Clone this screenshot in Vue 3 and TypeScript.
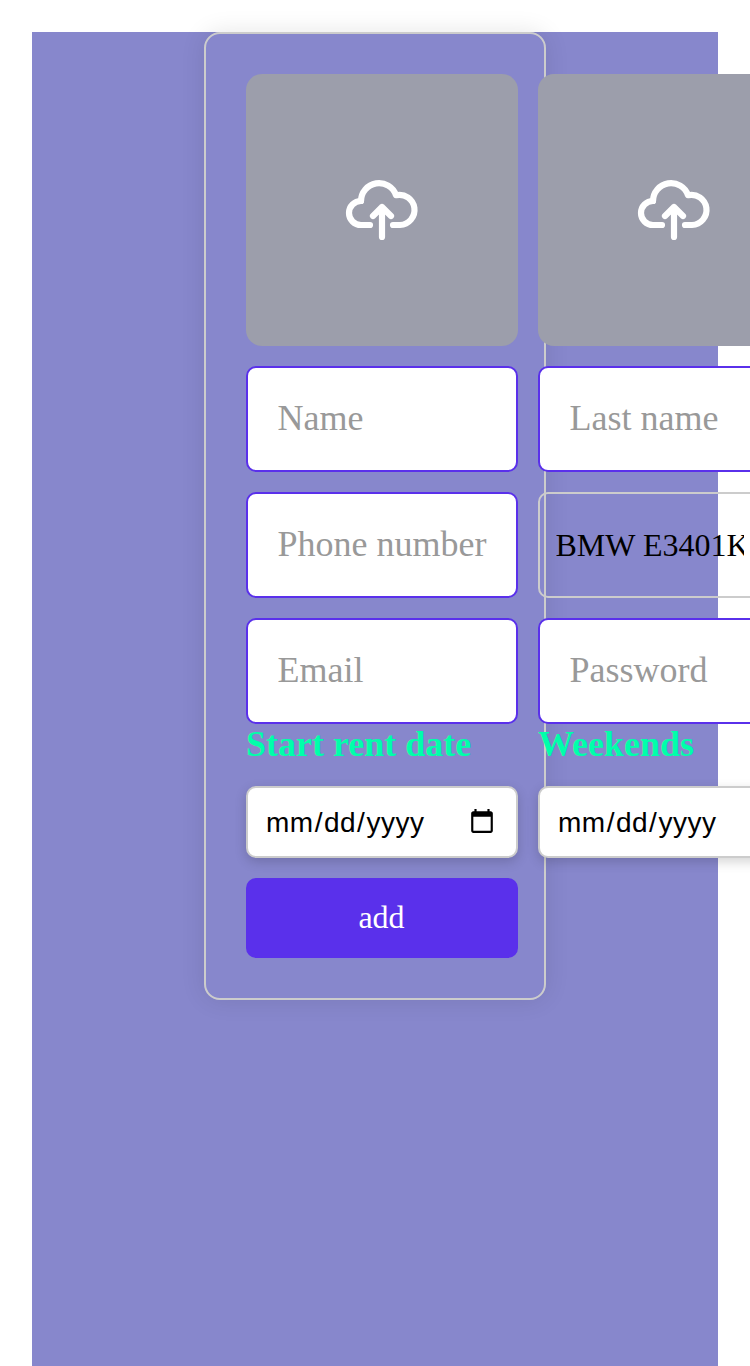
<script setup lang="ts">
import { ref } from 'vue'

interface Field {
  key: string
  label: string
  type: 'text' | 'tel' | 'email' | 'password' | 'select'
}

const uploads: string[] = ['photo', 'document']

const fields: Field[] = [
  { key: 'name', label: 'Name', type: 'text' },
  { key: 'lastName', label: 'Last name', type: 'text' },
  { key: 'phone', label: 'Phone number', type: 'tel' },
  { key: 'car', label: 'BMW E3401KA', type: 'select' },
  { key: 'email', label: 'Email', type: 'email' },
  { key: 'password', label: 'Password', type: 'password' },
]

const dates: string[] = ['Start rent date', 'Weekends']

const values = ref<Record<string, string>>({})
</script>

<template>
  <main class="page">
    <form class="card" @submit.prevent>
      <div v-for="item in uploads" :key="item" class="upload">
        <svg class="cloud" viewBox="0 0 72 60" fill="none" stroke="#fff" stroke-width="6.2" stroke-linecap="round" stroke-linejoin="round">
          <path d="M24 45H15A12 12 0 0 1 15 21" />
          <path d="M15 21A18 18 0 0 1 50 15.2A15.1 15.1 0 1 1 54 45H47" />
          <path d="M36 57V27M27 36L36 27L45 36" />
        </svg>
      </div>

      <template v-for="field in fields" :key="field.key">
        <select v-if="field.type === 'select'" class="select">
          <option>{{ field.label }}</option>
        </select>
        <input v-else v-model="values[field.key]" class="input" :type="field.type" :placeholder="field.label" />
      </template>

      <label v-for="title in dates" :key="title" class="date-field">
        <span class="date-title">{{ title }}</span>
        <input v-model="values[title]" class="date" type="date" />
      </label>

      <button class="submit" type="submit">add</button>
    </form>
  </main>
</template>

<style>
html,
body {
  margin: 0;
  overflow: hidden;
  background: #fff;
}
</style>

<style scoped>
.page {
  box-sizing: border-box;
  display: flex;
  justify-content: center;
  align-items: flex-start;
  height: 1334px;
  margin: 32px 32px 0;
  background: #8787cc;
  font-family: "Liberation Serif", serif;
}

.card {
  box-sizing: border-box;
  display: grid;
  grid-template-columns: 272px 272px;
  grid-template-rows: 272px 106px 106px 106px auto 80px;
  gap: 20px;
  width: 342px;
  height: 968px;
  padding: 40px;
  border: 2px solid #ccc;
  border-radius: 16px;
  box-shadow: 0 0 24px rgba(0, 0, 0, 0.1);
}

.upload {
  display: flex;
  align-items: center;
  justify-content: center;
  border-radius: 16px;
  background: #9c9eab;
}

.cloud {
  width: 72px;
  height: 60px;
  overflow: visible;
}

.input,
.select,
.date {
  box-sizing: border-box;
  width: 272px;
  margin: 0;
  outline: none;
}

.input {
  height: 106px;
  padding: 0 28px 2px 29.5px;
  border: 2px solid #5a30eb;
  border-radius: 10px;
  background: #fff;
  font: 36px "Liberation Serif", serif;
}

.input::placeholder {
  color: #999;
  opacity: 1;
}

.select {
  height: 106px;
  padding: 0 64px 0 15.5px;
  border: 2px solid #ccc;
  border-radius: 10px;
  appearance: none;
  background: transparent;
  color: #000;
  font: 32px "Liberation Serif", serif;
}

.date-field {
  display: flex;
  flex-direction: column;
  margin-top: -20px;
}

.date-title {
  height: 62px;
  color: #00ffaa;
  font-size: 36px;
  font-weight: 700;
  line-height: 41px;
  white-space: nowrap;
}

.date {
  height: 72px;
  padding: 0 18px 0 16px;
  border: 2px solid #ccc;
  border-radius: 10px;
  background: #fff;
  box-shadow: 0 4px 12px rgba(0, 0, 0, 0.17);
  color: #000;
  font: 28px "Liberation Sans", sans-serif;
}

.date::-webkit-datetime-edit {
  padding: 2px 0 0 1px;
  letter-spacing: 0.5px;
}

.submit {
  padding: 0 1px 2px 0;
  border: 0;
  border-radius: 10px;
  background: #5a30eb;
  color: #fff;
  font: 32px "Liberation Serif", serif;
}
</style>
